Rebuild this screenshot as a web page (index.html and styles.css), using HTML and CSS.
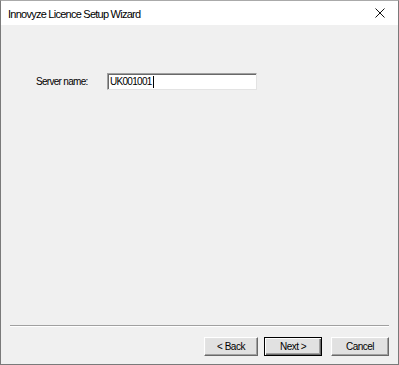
FILE: index.html
```html
<!DOCTYPE html>
<html>
<head>
    <title>Innovyze Licence Setup Wizard</title>
    <link rel="stylesheet" href="styles.css">
</head>
<body>
    <div class="window">
        <div class="title-bar">
            <span class="title">Innovyze Licence Setup Wizard</span>
            <span class="close">
                <svg width="10" height="10" viewBox="0 0 10 10">
                    <path d="M0.5 0.5 L9.5 9.5 M9.5 0.5 L0.5 9.5" stroke="#111" stroke-width="1" fill="none"/>
                </svg>
            </span>
        </div>
        <div class="client">
            <div class="page">
                <div class="field">
                    <label for="server" class="field-label">Server name:</label>
                    <div class="textbox"><span class="value">UK001001</span><span class="caret"></span></div>
                </div>
            </div>
            <div class="separator"></div>
            <div class="buttons">
                <button class="btn">&lt; Back</button>
                <button class="btn default">Next &gt;</button>
                <button class="btn cancel">Cancel</button>
            </div>
        </div>
    </div>
</body>
</html>
```

FILE: styles.css
```css
html, body {
    margin: 0;
    padding: 0;
}

body {
    width: 399px;
    height: 365px;
    font-family: 'Liberation Sans', Arial, sans-serif;
    background: #f0f0f0;
}

.window {
    box-sizing: border-box;
    width: 399px;
    height: 365px;
    border: 1px solid #7a7a7a;
    border-top-color: #aaaaaa;
    display: flex;
    flex-direction: column;
}

.title-bar {
    height: 24px;
    background: #ffffff;
    display: flex;
    align-items: center;
    justify-content: space-between;
    padding: 0 0 0 7px;
}

.title {
    font-size: 11px;
    letter-spacing: -0.75px;
    color: #000;
    margin-top: 1px;
}

.close {
    width: 30px;
    display: flex;
    justify-content: center;
    margin-right: 3px;
}

.close svg {
    display: block;
}

.client {
    flex: 1;
    background: #f0f0f0;
    display: flex;
    flex-direction: column;
}

.page {
    flex: 1;
    padding: 48px 0 0 35px;
}

.field {
    display: flex;
    align-items: center;
}

.field-label {
    font-size: 10px;
    letter-spacing: -0.7px;
    color: #000;
    width: 71px;
}

.textbox {
    box-sizing: border-box;
    width: 150px;
    height: 17px;
    background: #fff;
    border-top: 1px solid #a0a0a0;
    border-left: 1px solid #a0a0a0;
    border-right: 1px solid #e3e3e3;
    border-bottom: 1px solid #e3e3e3;
    box-shadow: inset 1px 1px 0 #696969;
    display: flex;
    align-items: center;
    padding-left: 2px;
    font-size: 10px;
    letter-spacing: -0.7px;
}

.caret {
    width: 1px;
    height: 12px;
    background: #000;
    margin-left: 1px;
}

.separator {
    margin: 0 9px 0 9px;
    height: 1px;
    background: #a0a0a0;
    border-bottom: 1px solid #ffffff;
}

.buttons {
    display: flex;
    justify-content: flex-end;
    padding: 10px 9px 8px 0;
}

.btn {
    box-sizing: border-box;
    width: 54px;
    height: 19px;
    font-family: 'Liberation Sans', Arial, sans-serif;
    font-size: 10px;
    letter-spacing: -0.5px;
    color: #000;
    background: #e1e1e1;
    border: 1px solid;
    border-color: #ffffff #696969 #696969 #ffffff;
    box-shadow: inset -1px -1px 0 #a0a0a0, inset 1px 1px 0 #e3e3e3;
    padding: 0;
}

.btn.default {
    width: 58px;
    margin-left: 6px;
    border: 1px solid #000;
    box-shadow: inset 1px 1px 0 #fff, inset -1px -1px 0 #696969, inset -2px -2px 0 #a0a0a0;
}

.btn.cancel {
    width: 58px;
    margin-left: 9px;
}
```
